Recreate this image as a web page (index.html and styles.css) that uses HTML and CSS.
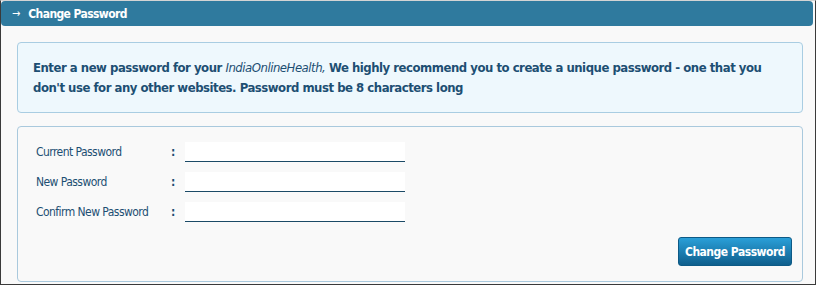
FILE: index.html
```html
<!DOCTYPE html>
<html lang="en">
<head>
<meta charset="utf-8">
<title>Change Password</title>
<link rel="stylesheet" href="styles.css">
</head>
<body>
<div class="window">
  <div class="titlebar"><span class="arrow">&rarr;</span><span class="title">Change Password</span></div>
  <div class="content">
    <div class="info">
      <p>Enter a new password for your <em>IndiaOnlineHealth,</em> We highly recommend you to create a unique password - one that you don't use for any other websites. Password must be 8 characters long</p>
    </div>
    <form class="form-box" onsubmit="return false">
      <div class="row">
        <label class="label" for="cur">Current Password</label>
        <span class="colon">:</span>
        <input class="field" id="cur" type="password">
      </div>
      <div class="row">
        <label class="label" for="new">New Password</label>
        <span class="colon">:</span>
        <input class="field" id="new" type="password">
      </div>
      <div class="row">
        <label class="label" for="conf">Confirm New Password</label>
        <span class="colon">:</span>
        <input class="field" id="conf" type="password">
      </div>
      <div class="actions">
        <button class="btn" type="submit">Change Password</button>
      </div>
    </form>
  </div>
</div>
</body>
</html>
```

FILE: styles.css
```css
* { box-sizing: border-box; }
html, body { margin: 0; padding: 0; background: #ffffff; }
body { font-family: "DejaVu Sans Condensed", "DejaVu Sans", sans-serif; color: #1d4f73; }

.window {
  width: 816px;
  height: 285px;
  border: 1px solid #3a3a3a;
  border-top-color: #d4d4d4;
  background: #f9f9f9;
  overflow: hidden;
}

.titlebar {
  height: 25px;
  margin-right: 2px;
  background: #2f7a9e;
  border-radius: 4px;
  color: #ffffff;
  display: flex;
  align-items: center;
  padding-left: 11px;
  font-size: 12px;
  font-weight: bold;
}
.title { letter-spacing: -0.6px; }
.arrow { font-weight: normal; font-size: 11px; margin-right: 8px; }

.content { padding: 16px 12px 0 16px; }

.info {
  background: #eef8fd;
  border: 1px solid #a9cde2;
  border-radius: 4px;
  padding: 15px 15px 14px 15px;
}
.info p {
  margin: 0;
  font-size: 13px;
  line-height: 20px;
  font-weight: bold;
  letter-spacing: -0.48px;
  color: #1d4f73;
}
.info em { font-weight: normal; font-style: italic; }

.form-box {
  margin: 13px 0 0 0;
  height: 156px;
  border: 1px solid #a9c9dd;
  border-radius: 4px;
  padding: 15px 10px 15px 18px;
  background: #f9f9f9;
  display: flex;
  flex-direction: column;
  gap: 10px;
}

.row { display: flex; align-items: center; height: 20px; }
.label { width: 135px; font-size: 12px; letter-spacing: -0.55px; color: #1d4f73; }
.colon { width: 14px; font-size: 12px; font-weight: bold; color: #1d4f73; }
.field {
  width: 220px;
  height: 20px;
  border: none;
  border-bottom: 1px solid #1b4a66;
  background: #ffffff;
  margin: 0;
  padding: 0 4px;
  outline: none;
}

.actions { display: flex; justify-content: flex-end; margin-top: 5px; }
.btn {
  width: 114px;
  height: 29px;
  border: 1px solid #0d5a86;
  border-radius: 3px;
  background: linear-gradient(#2a9fd8, #0f5f8d);
  color: #ffffff;
  font-family: "DejaVu Sans Condensed", "DejaVu Sans", sans-serif;
  font-size: 12px;
  font-weight: bold;
  letter-spacing: -0.5px;
  padding: 0;
  cursor: pointer;
}
```
